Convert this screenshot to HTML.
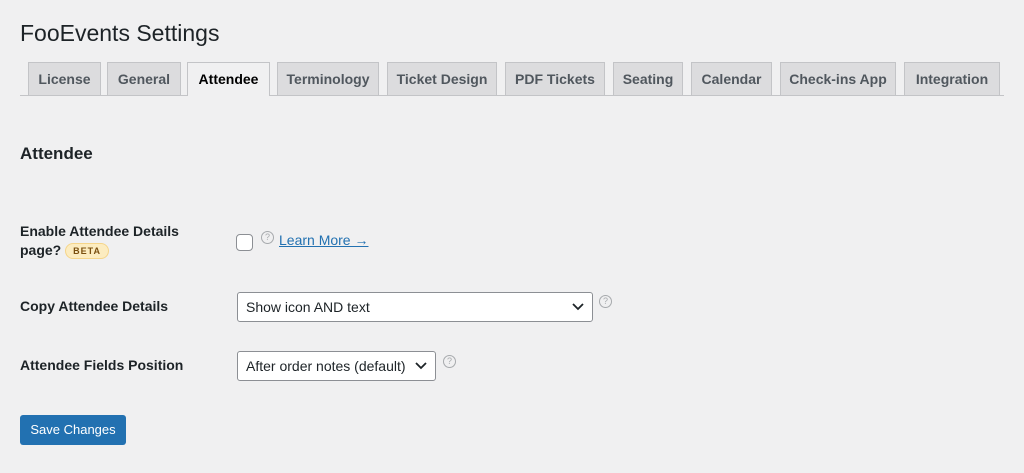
<!DOCTYPE html>
<html><head><style>
body{margin:0;width:1024px;height:473px;background:#f0f0f1;font-family:"Liberation Sans",sans-serif;color:#1d2327;position:relative;overflow:hidden}
.a{position:absolute}
h1{position:absolute;left:20px;top:20px;margin:0;font-size:23px;font-weight:400;color:#1d2327}
.line{position:absolute;left:20px;width:984px;top:95px;height:1px;background:#c3c4c7}
.tab{position:absolute;top:62px;height:32px;background:#dcdcde;border:1px solid #c3c4c7;border-bottom:none;font-size:14px;font-weight:700;color:#50575e;text-align:center;line-height:32px;box-sizing:border-box;height:33px}
.tab.on{background:#f0f0f1;color:#000;height:34px}
.lbl{font-size:14px;font-weight:700;color:#1d2327}
.sel{position:absolute;background:#fff;border:1px solid #8c8f94;border-radius:3px;box-sizing:border-box;font-size:14px;line-height:28px;padding-left:8px;height:30px}
.q{position:absolute;width:11px;height:11px;border:1px solid #a7aaad;border-radius:50%;font-size:9px;color:#a7aaad;text-align:center;line-height:11px}
</style></head><body>
<h1>FooEvents Settings</h1>
<div class="line"></div>
<div class="tab" style="left:28px;width:73px">License</div>
<div class="tab" style="left:107px;width:74px">General</div>
<div class="tab on" style="left:187px;width:83px">Attendee</div>
<div class="tab" style="left:277px;width:102px">Terminology</div>
<div class="tab" style="left:387px;width:110px">Ticket Design</div>
<div class="tab" style="left:505px;width:100px">PDF Tickets</div>
<div class="tab" style="left:613px;width:70px">Seating</div>
<div class="tab" style="left:691px;width:81px">Calendar</div>
<div class="tab" style="left:780px;width:116px">Check-ins App</div>
<div class="tab" style="left:904px;width:96px">Integration</div>
<div class="a" style="left:20px;top:144px;font-size:17px;font-weight:700">Attendee</div>
<div class="a lbl" style="left:20px;top:222px;line-height:19px">Enable Attendee Details<br>page? <span style="display:inline-block;background:#fcecc0;border:1px solid #f5d58a;border-radius:9px;font-size:9px;color:#7a4f10;padding:0 7px;line-height:14px;letter-spacing:1px;vertical-align:1px">BETA</span></div>
<div class="a" style="left:236px;top:234px;width:15px;height:15px;background:#fff;border:1px solid #8c8f94;border-radius:4px"></div>
<div class="q" style="left:261px;top:231px">?</div>
<div class="a" style="left:279px;top:232px;font-size:14px;color:#2271b1;text-decoration:underline">Learn More →</div>
<div class="a lbl" style="left:20px;top:298px">Copy Attendee Details</div>
<div class="sel" style="left:237px;top:292px;width:356px">Show icon AND text<svg class="a" style="right:8px;top:10px" width="12" height="8"><path d="M1 1l5 5 5-5" stroke="#1d2327" stroke-width="1.8" fill="none"/></svg></div>
<div class="q" style="left:599px;top:295px">?</div>
<div class="a lbl" style="left:20px;top:357px">Attendee Fields Position</div>
<div class="sel" style="left:237px;top:351px;width:199px">After order notes (default)<svg class="a" style="right:8px;top:10px" width="12" height="8"><path d="M1 1l5 5 5-5" stroke="#1d2327" stroke-width="1.8" fill="none"/></svg></div>
<div class="q" style="left:443px;top:355px">?</div>
<div class="a" style="left:20px;top:415px;width:106px;height:30px;background:#2271b1;border-radius:3px;color:#fff;font-size:13px;line-height:30px;text-align:center">Save Changes</div>
</body></html>
